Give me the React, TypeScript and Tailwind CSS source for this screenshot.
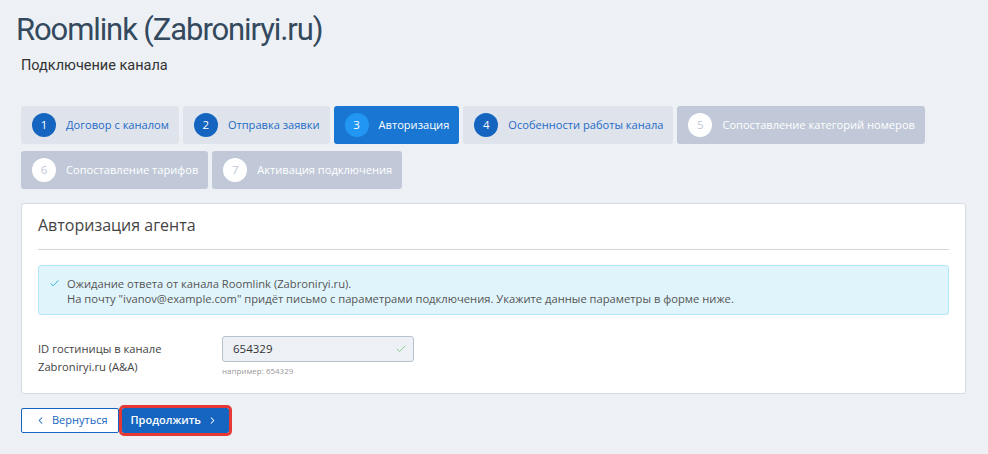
import { Check, ChevronLeft, ChevronRight } from "lucide-react";

type StepState = "done" | "active" | "todo";

const steps: { n: number; label: string; state: StepState }[] = [
  { n: 1, label: "Договор с каналом", state: "done" },
  { n: 2, label: "Отправка заявки", state: "done" },
  { n: 3, label: "Авторизация", state: "active" },
  { n: 4, label: "Особенности работы канала", state: "done" },
  { n: 5, label: "Сопоставление категорий номеров", state: "todo" },
  { n: 6, label: "Сопоставление тарифов", state: "todo" },
  { n: 7, label: "Активация подключения", state: "todo" },
];

function Step({ n, label, state }: { n: number; label: string; state: StepState }) {
  const box =
    state === "active"
      ? "bg-[#1976d2] text-white"
      : state === "done"
      ? "bg-[#dfe3ec] text-[#1e6bc6]"
      : "bg-[#c1c9d8] text-white";
  const dot =
    state === "active"
      ? "bg-[#2196f3] text-white"
      : state === "done"
      ? "bg-[#1565c0] text-white"
      : "bg-white text-[#c1c9d8]";
  return (
    <div className={`flex h-[38px] items-center gap-[10px] rounded-[3px] pl-[11px] pr-[10px] ${box}`}>
      <span className={`flex h-[24px] w-[24px] items-center justify-center rounded-full text-[11.5px] ${dot}`}>
        {n}
      </span>
      <span className="text-[11.1px] whitespace-nowrap">{label}</span>
    </div>
  );
}

export default function App() {
  return (
    <div
      className="min-h-[454px] bg-[#edf1f5] text-[#444]"
      style={{ fontFamily: '"Open Sans", "Liberation Sans", sans-serif' }}
    >
      <div className="px-[16px] pt-[10px]">
        <h1
          className="text-[31px] leading-[40px] tracking-[-1.1px] text-[#34495e]"
          style={{ fontFamily: 'Roboto, "Liberation Sans", sans-serif' }}
        >
          Roomlink (Zabroniryi.ru)
        </h1>
        <p
          className="mt-[7px] pl-[5px] text-[14.5px] leading-[18px] text-[#333]"
          style={{ fontFamily: 'Roboto, "Liberation Sans", sans-serif' }}
        >
          Подключение канала
        </p>
      </div>

      <div className="mt-[31px] pl-[21px] pr-[22px]">
        {/* Steps */}
        <div className="flex flex-wrap gap-x-[4px] gap-y-[7px]">
          {steps.map((s) => (
            <Step key={s.n} {...s} />
          ))}
        </div>

        {/* Card */}
        <div className="mt-[14px] rounded-[3px] border border-[#d5dbe3] bg-white px-[16px] pb-[17px]">
          <h2 className="pt-[11px] pb-[13px] text-[16px] leading-[21px] text-[#444]">Авторизация агента</h2>
          <div className="h-px bg-[#d3d7dc]" />

          <div className="mt-[15px] flex gap-[7px] rounded-[3px] border border-[#b3e5fc] bg-[#e0f4fc] pl-[10px] pr-[13px] pt-[10px] pb-[8px] text-[11.2px] leading-[15px] text-[#555]">
            <Check className="mt-[2px] h-[11px] w-[11px] shrink-0 text-[#29a9e0]" strokeWidth={2} />
            <div>
              <p>Ожидание ответа от канала Roomlink (Zabroniryi.ru).</p>
              <p>
                На почту "ivanov@example.com" придёт письмо с параметрами подключения. Укажите данные параметры в форме ниже.
              </p>
            </div>
          </div>

          <div className="mt-[21px] flex">
            <label className="w-[184px] pt-[4px] text-[11.2px] leading-[18px] text-[#444]">
              ID гостиницы в канале
              <br />
              Zabroniryi.ru (A&amp;A)
            </label>
            <div>
              <div className="flex h-[26px] w-[192px] items-center justify-between rounded-[3px] border border-[#b8c3d0] bg-[#edf1f5] pl-[10px] pr-[6px] text-[11.5px] text-[#333]">
                <span>654329</span>
                <Check className="h-[12px] w-[12px] text-[#6cc070]" strokeWidth={1.5} />
              </div>
              <p className="mt-[3px] text-[8px] leading-[11px] text-[#999]">например: 654329</p>
            </div>
          </div>
        </div>

        {/* Actions */}
        <div className="mt-[14px] flex items-center gap-[3px]">
          <button className="flex h-[25px] items-center gap-[6px] rounded-[2px] border border-[#1565c0] bg-white pl-[13px] pr-[10px] text-[11px] text-[#1565c0]">
            <ChevronLeft className="h-[11px] w-[11px]" strokeWidth={2.2} />
            Вернуться
          </button>
          <button className="flex h-[25px] items-center gap-[6px] rounded-[2px] bg-[#1565c0] pl-[9px] pr-[11px] text-[11px] font-semibold text-white outline outline-[3px] outline-offset-0 outline-[#e53935]">
            Продолжить
            <ChevronRight className="h-[11px] w-[11px]" strokeWidth={2.2} />
          </button>
        </div>
      </div>
    </div>
  );
}
